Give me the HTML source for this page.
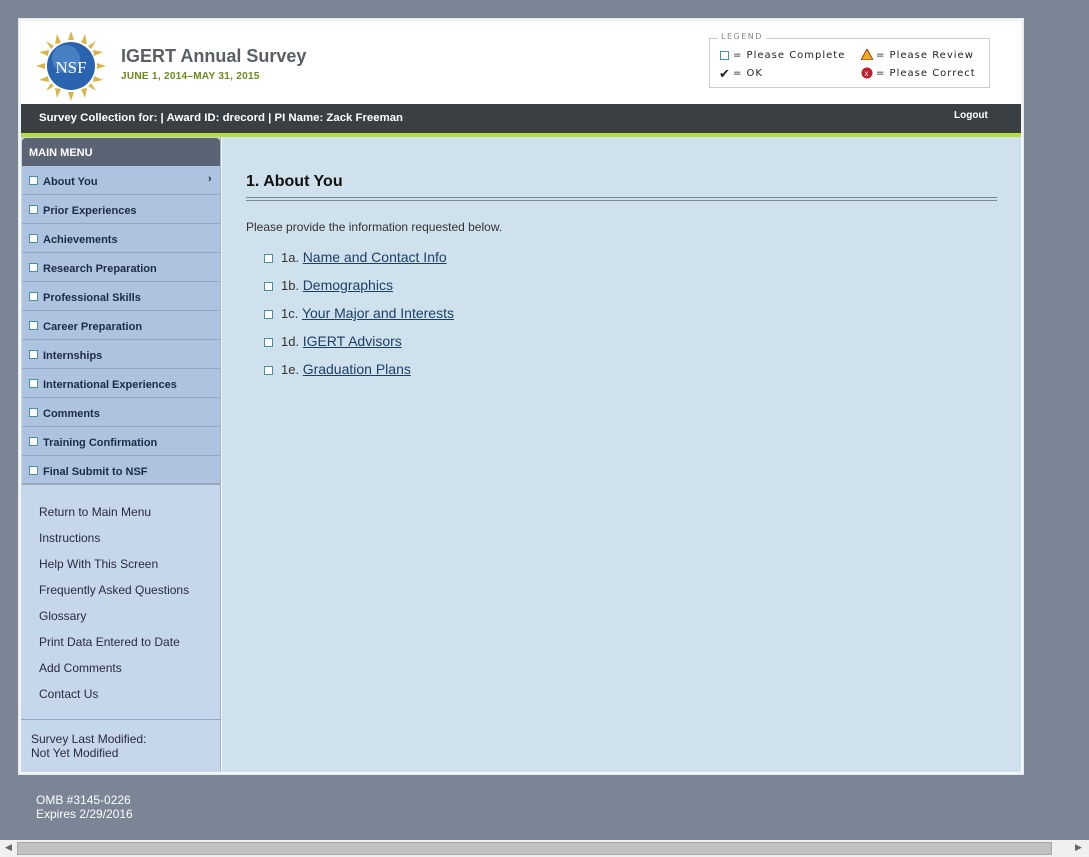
<!DOCTYPE html>
<html><head><style>
*{margin:0;padding:0;box-sizing:border-box}
body{width:1089px;height:857px;background:#7a8595;font-family:"Liberation Sans",Arial,sans-serif;position:relative;overflow:hidden}
.abs{position:absolute}
.box{left:18px;top:18px;width:1006px;height:757px;background:#f4f5f6;border:1px solid #e6e8ea}
.hdr{left:21px;top:21px;width:1000px;height:83px;background:#fff}
.bar{left:21px;top:104px;width:1000px;height:29px;background:#3a3f44;color:#fff;font-size:11.4px;font-weight:bold}
.green{left:21px;top:133px;width:1000px;height:4px;background:#b5e03a}
.side{left:21px;top:137px;width:200px;height:635px;background:#c6d6eb;border-right:1px solid #9fb3cc}
.main{left:222px;top:137px;width:799px;height:635px;background:#d0e1ee}
.mh{left:22px;top:138px;width:198px;height:28px;background:#5b6474;border-radius:4px 4px 0 0;color:#fff;font-size:11px;font-weight:bold;padding:9px 0 0 7px}
.mi{left:22px;width:198px;height:29px;background:#aec3df;border-bottom:1px solid #8fa8c8;font-size:11px;font-weight:bold;color:#1d2b4a;padding:10px 0 0 21px}
.cb{position:absolute;width:9px;height:9px;border:1px solid #4a8fa0;background:#fff}
.mi .cb{left:7px;top:10px}
.lk{left:39px;font-size:12px;color:#2a2a44}
.leg{left:709px;top:38px;width:281px;height:50px;border:1px solid #ccc;font-family:"DejaVu Sans",sans-serif;font-size:10px;letter-spacing:1px;color:#222}
a{color:#1d3f66}
.it{left:264px;font-size:13px;color:#333}
.it .cb{position:relative;display:inline-block;top:1px;margin-right:8px}
</style></head><body>
<div class="abs box"></div>
<div class="abs hdr"></div>
<svg class="abs" style="left:36px;top:31px" width="70" height="70" viewBox="0 0 70 70">
<g fill="#d9b64a"><polygon points="35,0 38,9 32,9"/><polygon points="35,70 38,61 32,61"/><polygon points="0,35 9,32 9,38"/><polygon points="70,35 61,32 61,38"/>
<polygon points="10,10 18,15 15,18"/><polygon points="60,10 52,15 55,18"/><polygon points="10,60 18,55 15,52"/><polygon points="60,60 52,55 55,52"/>
<polygon points="21,3 25,12 19,13"/><polygon points="49,3 45,12 51,13"/><polygon points="21,67 25,58 19,57"/><polygon points="49,67 45,58 51,57"/>
<polygon points="3,21 12,25 13,19"/><polygon points="67,21 58,25 57,19"/><polygon points="3,49 12,45 13,51"/><polygon points="67,49 58,45 57,51"/></g>
<circle cx="35" cy="35" r="24" fill="#2a64b0"/><circle cx="30" cy="28" r="14" fill="#5b92d0" opacity=".6"/>
<text x="35" y="42" text-anchor="middle" font-family="Liberation Serif" font-size="17" fill="#fff">NSF</text></svg>
<div class="abs" style="left:121px;top:46px;font-size:18px;font-weight:bold;color:#5a5f66">IGERT Annual Survey</div>
<div class="abs" style="left:121px;top:71px;font-size:10px;font-weight:bold;color:#6a8a1a;letter-spacing:.3px">JUNE 1, 2014–MAY 31, 2015</div>
<div class="abs leg">
<span class="abs" style="left:8px;top:-7px;background:#fff;padding:0 3px;font-size:8px;color:#888;letter-spacing:1.5px">LEGEND</span>
<span class="cb" style="left:10px;top:12px;border-color:#4a8fa0"></span><span class="abs" style="left:23px;top:11px">= Please Complete</span>
<span class="abs" style="left:9px;top:28px;font-size:13px;font-weight:bold">✔</span><span class="abs" style="left:23px;top:29px">= OK</span>
<svg class="abs" style="left:151px;top:10px" width="12" height="11"><polygon points="6,0 12,11 0,11" fill="#e7b020" stroke="#b03010"/></svg><span class="abs" style="left:166px;top:11px">= Please Review</span>
<svg class="abs" style="left:151px;top:28px" width="12" height="12"><circle cx="6" cy="6" r="5.5" fill="#c0202a"/><text x="6" y="9" font-size="8" text-anchor="middle" fill="#fff" font-family="Liberation Sans">x</text></svg><span class="abs" style="left:166px;top:29px">= Please Correct</span>
</div>
<div class="abs bar"><span class="abs" style="left:18px;top:8px">Survey Collection for: | Award ID: drecord | PI Name: Zack Freeman</span><span class="abs" style="left:933px;top:6px;font-size:10px">Logout</span></div>
<div class="abs green"></div>
<div class="abs side"></div>
<div class="abs main"></div>
<div class="abs mh">MAIN MENU</div>
<div class="abs mi" style="top:166px"><span class="cb"></span>About You<span class="abs" style="left:186px;top:7px">›</span></div>
<div class="abs mi" style="top:195px"><span class="cb"></span>Prior Experiences</div>
<div class="abs mi" style="top:224px"><span class="cb"></span>Achievements</div>
<div class="abs mi" style="top:253px"><span class="cb"></span>Research Preparation</div>
<div class="abs mi" style="top:282px"><span class="cb"></span>Professional Skills</div>
<div class="abs mi" style="top:311px"><span class="cb"></span>Career Preparation</div>
<div class="abs mi" style="top:340px"><span class="cb"></span>Internships</div>
<div class="abs mi" style="top:369px"><span class="cb"></span>International Experiences</div>
<div class="abs mi" style="top:398px"><span class="cb"></span>Comments</div>
<div class="abs mi" style="top:427px"><span class="cb"></span>Training Confirmation</div>
<div class="abs mi" style="top:456px;border-bottom:2px solid #9aa8b8"><span class="cb"></span>Final Submit to NSF</div>
<div class="abs lk" style="top:505px">Return to Main Menu</div>
<div class="abs lk" style="top:531px">Instructions</div>
<div class="abs lk" style="top:557px">Help With This Screen</div>
<div class="abs lk" style="top:583px">Frequently Asked Questions</div>
<div class="abs lk" style="top:609px">Glossary</div>
<div class="abs lk" style="top:635px">Print Data Entered to Date</div>
<div class="abs lk" style="top:661px">Add Comments</div>
<div class="abs lk" style="top:687px">Contact Us</div>
<div class="abs" style="left:21px;top:719px;width:200px;height:1px;background:#8fa8c8"></div>
<div class="abs lk" style="left:31px;top:732px;line-height:14px">Survey Last Modified:<br>Not Yet Modified</div>
<div class="abs" style="left:246px;top:173px;font-size:16px;font-weight:bold;color:#111">1. About You</div>
<div class="abs" style="left:246px;top:197px;width:751px;height:4px;border-top:1px solid #7d8794;border-bottom:1px solid #7d8794"></div>
<div class="abs" style="left:246px;top:220px;font-size:12px;color:#333">Please provide the information requested below.</div>
<div class="abs it" style="top:249px"><span class="cb"></span>1a. <a href="#" style="font-size:14px">Name and Contact Info</a></div>
<div class="abs it" style="top:277px"><span class="cb"></span>1b. <a href="#" style="font-size:14px">Demographics</a></div>
<div class="abs it" style="top:305px"><span class="cb"></span>1c. <a href="#" style="font-size:14px">Your Major and Interests</a></div>
<div class="abs it" style="top:333px"><span class="cb"></span>1d. <a href="#" style="font-size:14px">IGERT Advisors</a></div>
<div class="abs it" style="top:361px"><span class="cb"></span>1e. <a href="#" style="font-size:14px">Graduation Plans</a></div>
<div class="abs" style="left:36px;top:793px;font-size:12px;color:#fff;line-height:14px">OMB #3145-0226<br>Expires 2/29/2016</div>
<div class="abs" style="left:0;top:840px;width:1089px;height:17px;background:#f0f0f0"></div>
<div class="abs" style="left:17px;top:842px;width:1035px;height:13px;background:#c1c1c1;border:1px solid #a8a8a8"></div>
<div class="abs" style="left:5px;top:842px;font-size:9px;color:#666">◀</div>
<div class="abs" style="left:1075px;top:842px;font-size:9px;color:#666">▶</div>
</body></html>
